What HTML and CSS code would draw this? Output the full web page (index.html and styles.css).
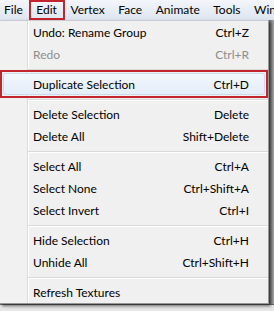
FILE: index.html
```html
<!DOCTYPE html>
<html lang="en">
<head>
  <meta charset="UTF-8">
  <title>Edit menu</title>
  <link rel="stylesheet" href="styles.css">
</head>
<body>
  <div class="app">
    <div class="menubar">
      <span class="bar-item">File</span>
      <span class="bar-item active">Edit</span>
      <span class="bar-item">Vertex</span>
      <span class="bar-item">Face</span>
      <span class="bar-item">Animate</span>
      <span class="bar-item">Tools</span>
      <span class="bar-item">Window</span>
    </div>

    <div class="workspace">
      <div class="dropdown">
        <div class="item"><span>Undo: Rename Group</span><span>Ctrl+Z</span></div>
        <div class="item disabled"><span>Redo</span><span>Ctrl+R</span></div>
        <div class="sep"></div>
        <div class="item hover"><span>Duplicate Selection</span><span>Ctrl+D</span></div>
        <div class="sep"></div>
        <div class="item"><span>Delete Selection</span><span>Delete</span></div>
        <div class="item"><span>Delete All</span><span>Shift+Delete</span></div>
        <div class="sep"></div>
        <div class="item"><span>Select All</span><span>Ctrl+A</span></div>
        <div class="item"><span>Select None</span><span>Ctrl+Shift+A</span></div>
        <div class="item"><span>Select Invert</span><span>Ctrl+I</span></div>
        <div class="sep"></div>
        <div class="item"><span>Hide Selection</span><span>Ctrl+H</span></div>
        <div class="item"><span>Unhide All</span><span>Ctrl+Shift+H</span></div>
        <div class="sep"></div>
        <div class="item"><span>Refresh Textures</span><span></span></div>
      </div>
      <div class="backdrop-right"></div>
    </div>

    <div class="backdrop-bottom"></div>

    <!-- mouse pointer over the hovered item -->
    <svg class="cursor" width="13" height="20" viewBox="0 0 13 20">
      <path d="M0.5 0.5 L0.5 15.5 L4 12.2 L6.6 18.6 L9 17.6 L6.4 11.3 L11 11.3 Z" fill="#fff" stroke="#666" stroke-width="1" stroke-linejoin="round"/>
    </svg>
  </div>
</body>
</html>
```

FILE: styles.css
```css
* {
  margin: 0;
  padding: 0;
  box-sizing: border-box;
}

body {
  font-family: Lato, "Noto Sans", sans-serif;
  font-size: 12px;
  color: #000;
  background: #e9e9e9;
}

.app {
  position: relative;
  width: 274px;
  height: 311px;
  overflow: hidden;
}

.menubar {
  height: 20px;
  display: flex;
  align-items: center;
  padding-left: 4px;
  gap: 13.5px;
  background: linear-gradient(#f3f6fb, #dde5f0);
  white-space: nowrap;
}

.bar-item {
  line-height: 16px;
}

.bar-item.active {
  position: relative;
}

/* pressed look + red annotation round "Edit" */
.bar-item.active::before {
  content: "";
  position: absolute;
  left: -4px;
  right: -4px;
  top: 0;
  bottom: -2px;
  border: 1px solid #8d99a8;
  border-radius: 2px;
  background: rgba(160, 175, 195, 0.25);
  z-index: -1;
}

.bar-item.active::after {
  content: "";
  position: absolute;
  left: -7px;
  right: -8px;
  top: -2px;
  bottom: -2px;
  border: 2px solid #c4242b;
}

.workspace {
  display: flex;
  height: 284px;
}

.dropdown {
  width: 269px;
  border-top: 1px solid #c8ccd2;
  border-right: 1px solid #979797;
  border-bottom: 1px solid #979797;
  background: linear-gradient(to right, #f1f1f1 0 27px, #dcdcdc 27px 28px, #ffffff 28px 29px, #f0f0f0 29px);
  box-shadow: 2px 2px 3px rgba(0, 0, 0, 0.55);
  position: relative;
  z-index: 1;
}

.item {
  height: 22px;
  margin: 0 3px;
  padding: 0 16px 0 30px;
  display: flex;
  align-items: center;
  justify-content: space-between;
  white-space: nowrap;
}

.item.disabled {
  color: #8d8d8d;
}

.item.hover {
  position: relative;
  border-radius: 3px;
  background: linear-gradient(#f4f8fd, #e3ecf8);
  box-shadow: inset 0 0 0 1px #c9dbf1;
}

/* red annotation box */
.item.hover::after {
  content: "";
  position: absolute;
  left: -3px;
  right: -3px;
  top: -3px;
  bottom: -3px;
  border: 2px solid #c4242b;
}

.sep {
  height: 8px;
  margin-left: 28px;
  display: flex;
  flex-direction: column;
  justify-content: center;
}

.sep::before {
  content: "";
  display: block;
  height: 1px;
  background: #dadada;
  box-shadow: 0 1px 0 #fff;
}

.backdrop-right {
  flex: 1;
  background: linear-gradient(to right, #707070, #a8a8a8);
}

.backdrop-bottom {
  height: 7px;
  background: #e6e6e6;
  border-top: 1px solid #6a6a6a;
}

.cursor {
  position: absolute;
  left: 197px;
  top: 83px;
}
```
